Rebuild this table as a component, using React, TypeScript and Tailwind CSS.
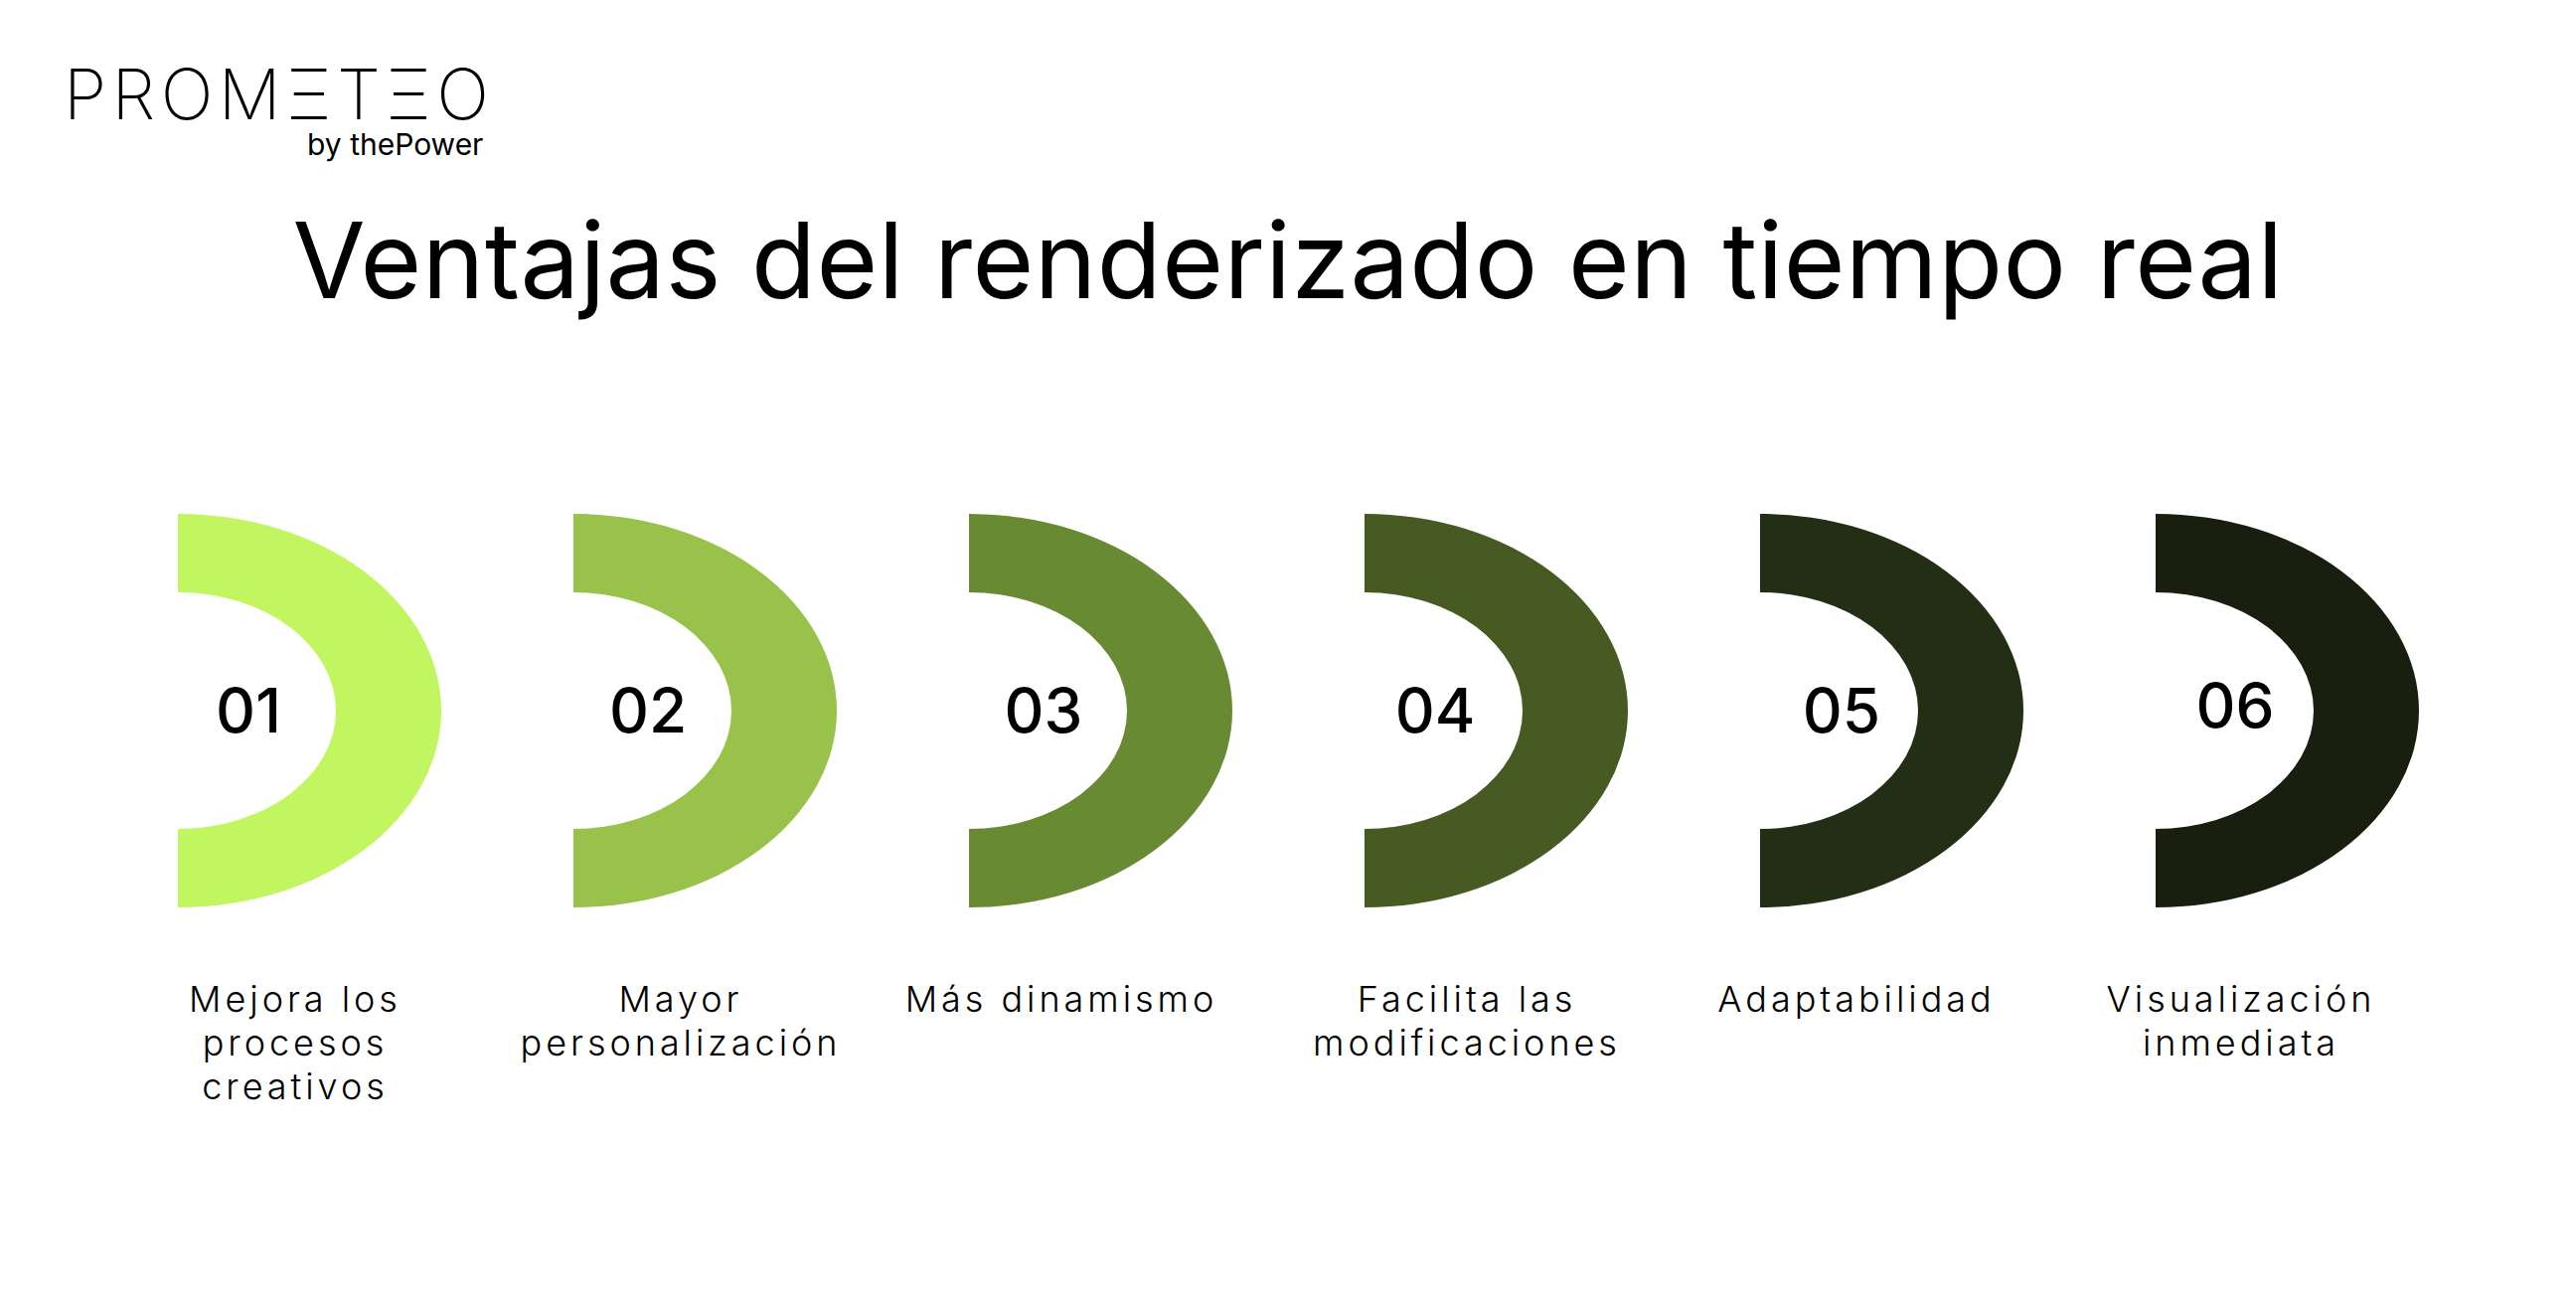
const steps = [
  { num: '01', color: '#c1f661', lines: ['Mejora los', 'procesos', 'creativos'], box: 'w-[236px]', numBox: 'w-[142px]', numPos: 'top-[167px]' },
  { num: '02', color: '#98c24a', lines: ['Mayor', 'personalización'], box: 'w-[216px]', numBox: 'w-[150px]', numPos: 'top-[167px]' },
  { num: '03', color: '#688a33', lines: ['Más dinamismo'], box: 'w-[186px]', numBox: 'w-[150px]', numPos: 'top-[167px]' },
  { num: '04', color: '#465a22', lines: ['Facilita las', 'modificaciones'], box: 'w-[206px]', numBox: 'w-[142px]', numPos: 'top-[167px]' },
  { num: '05', color: '#222f14', lines: ['Adaptabilidad'], box: 'w-[194px]', numBox: 'w-[164px]', numPos: 'top-[167px]' },
  { num: '06', color: '#181f0f', lines: ['Visualización', 'inmediata'], box: 'w-[172px]', numBox: 'w-[160px]', numPos: 'top-[162px]' },
]

function Arc({ color }: { color: string }) {
  return (
    <svg width="265" height="396" viewBox="0 0 265 396" className="block">
      <path d="M0 0 A265 198 0 0 1 0 396 L0 317 A159 119 0 0 0 0 79 Z" fill={color} />
    </svg>
  )
}

export default function App() {
  return (
    <div className="w-[2592px] h-[1310px] bg-white text-black font-['Inter','Liberation_Sans',sans-serif] flex flex-col">
      {/* Logo */}
      <div className="pl-[64px] pt-[69px]">
        <div className="inline-flex flex-col items-end">
          <div className="text-[70px] leading-[52px] font-extralight tracking-[0.077em] mr-[-5px]">PROMΞTΞO</div>
          <div className="text-[30px] leading-[34px] mt-[7px] mr-[6px]">by thePower</div>
        </div>
      </div>

      {/* Title */}
      <h1 className="text-center text-[106px] leading-[106px] font-normal mt-[47px] tracking-[0.004em]">
        Ventajas del renderizado en tiempo real
      </h1>

      {/* Steps */}
      <div className="flex pl-[179px] mt-[202px]">
        {steps.map((s) => (
          <div key={s.num} className="w-[398px] shrink-0 flex flex-col">
            <div className="relative w-[265px] h-[396px]">
              <Arc color={s.color} />
              <div className={`absolute left-0 ${s.numPos} ${s.numBox} flex justify-center text-[62px] leading-[62px] font-medium`}>
                {s.num}
              </div>
            </div>
            <div className={`${s.box} mt-[70px] flex flex-col items-center text-[36px] leading-[44px] font-light tracking-[0.11em]`}>
              {s.lines.map((l) => (
                <span key={l} className="whitespace-nowrap">{l}</span>
              ))}
            </div>
          </div>
        ))}
      </div>
    </div>
  )
}
